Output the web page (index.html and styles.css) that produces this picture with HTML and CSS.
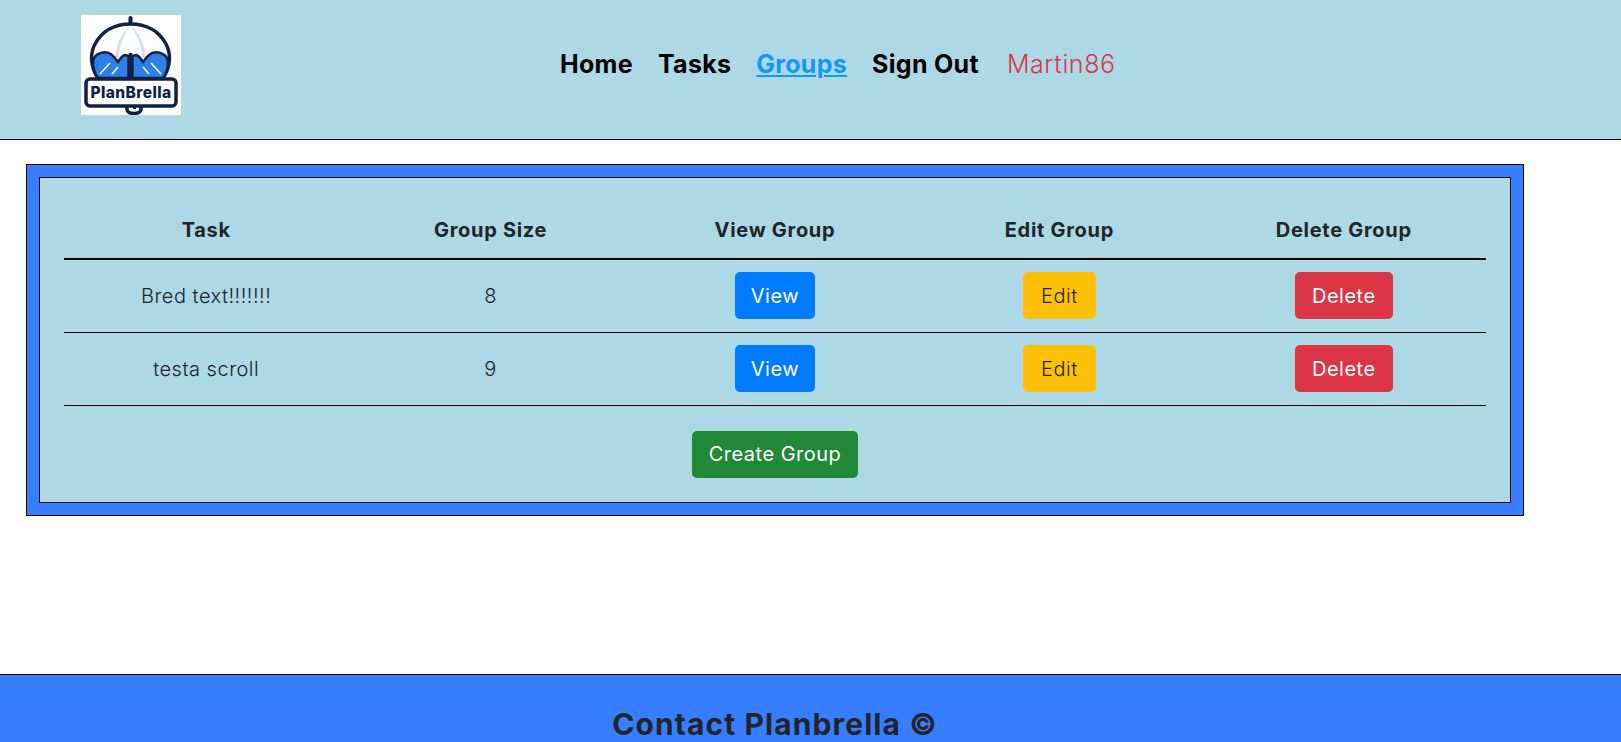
FILE: index.html
```html
<!DOCTYPE html>
<html lang="en">
<head>
  <meta charset="UTF-8" />
  <meta name="viewport" content="width=device-width, initial-scale=1.0"/>
  <title>Planbrella Groups</title>
  <link rel="stylesheet" href="styles.css">
</head>
<body>
  <header class="site-header">
    <div class="logo">
      <svg viewBox="0 0 100 100" width="100" height="100">
        <rect width="100" height="100" fill="#fff"/>
        <path d="M49.5 9 L49.5 3" stroke="#0f2147" stroke-width="4" stroke-linecap="round"/>
        <path d="M17 63 C9 52 9 38 14 29 C21 16 34 9 49.5 9 C65 9 78 16 85 29 C90 38 90 52 82 63 Z" fill="#fff" stroke="#0f2147" stroke-width="3.5"/>
        <path d="M49.5 11 C41 18 34 30 35 42 L38 42 C38 30 43 20 49.5 11 C56 20 61 30 61 42 L64 42 C65 30 58 18 49.5 11 Z" fill="#d5e0ee"/>
        <g id="lobe">
          <path d="M12 46 C13 39 24 34 31 40 C34 42 36 46 37 47 C38 46 40 41 44 40 L47.5 41 L47.5 63 L17 63 C13 58 12 52 12 46 Z" fill="#2f7fe8" stroke="#0f2147" stroke-width="2.5"/>
          <path d="M19 59 L29 48 M31 59 L37 52" stroke="#fff" stroke-width="1.5" fill="none"/>
        </g>
        <use href="#lobe" transform="translate(99 0) scale(-1 1)"/>
        <path d="M49.5 38 L49.5 64" stroke="#0f2147" stroke-width="3.5"/>
        <path d="M46 90 L46 94 C46 100 60 100 60 94 L60 90" fill="#fff" stroke="#0f2147" stroke-width="3.5"/>
        <path d="M52 91 L52 94 L55 94 L55 91 Z" fill="#0f2147"/>
        <rect x="5" y="64" width="90" height="27" rx="4" fill="#fff" stroke="#0f2147" stroke-width="3.5"/>
        <text x="50" y="83" class="logo-text" text-anchor="middle">PlanBrella</text>
      </svg>
    </div>
    <nav class="main-nav">
      <a href="#">Home</a>
      <a href="#">Tasks</a>
      <a href="#" class="active">Groups</a>
      <a href="#">Sign Out</a>
      <span class="username">Martin86</span>
    </nav>
  </header>

  <main class="content">
    <div class="outer-box">
      <div class="inner-box">
        <table class="groups">
          <thead>
            <tr>
              <th>Task</th>
              <th>Group Size</th>
              <th>View Group</th>
              <th>Edit Group</th>
              <th>Delete Group</th>
            </tr>
          </thead>
          <tbody>
            <tr>
              <td>Bred text!!!!!!!</td>
              <td>8</td>
              <td><button class="btn btn-view">View</button></td>
              <td><button class="btn btn-edit">Edit</button></td>
              <td><button class="btn btn-delete">Delete</button></td>
            </tr>
            <tr>
              <td>testa scroll</td>
              <td>9</td>
              <td><button class="btn btn-view">View</button></td>
              <td><button class="btn btn-edit">Edit</button></td>
              <td><button class="btn btn-delete">Delete</button></td>
            </tr>
          </tbody>
        </table>
        <div class="create-row">
          <button class="btn btn-create">Create Group</button>
        </div>
      </div>
    </div>
  </main>

  <footer class="site-footer">
    <h2>Contact Planbrella ©</h2>
  </footer>
</body>
</html>
```

FILE: styles.css
```css
* {
  box-sizing: border-box;
}
html, body {
  height: 100%;
}
body {
  margin: 0;
  overflow: hidden;
  background: #fff;
  color: #212529;
  font-family: Inter, "Open Sans", sans-serif;
}

.site-header {
  height: 140px;
  display: flex;
  background: #add8e6;
  border-bottom: 1px solid #000;
  padding: 15px 0 0 81px;
}
.logo {
  width: 100px;
  height: 100px;
}
.logo-text {
  font-family: Inter, sans-serif;
  font-weight: 800;
  font-size: 15.5px;
  letter-spacing: 0.4px;
  fill: #0f2147;
}
.main-nav {
  display: flex;
  align-items: center;
  gap: 25px;
  height: 98px;
  margin-left: 379px;
  font-size: 25px;
  letter-spacing: 0.3px;
  font-weight: 700;
}
.main-nav a {
  color: #000;
  text-decoration: none;
}
.main-nav a.active {
  color: #0d99ff;
  text-decoration: underline;
}
.username {
  margin-left: 3px;
  color: #dc3545;
  font-weight: 300;
  letter-spacing: 0.6px;
}

.content {
  height: 534px;
  padding: 24px 0 0 26px;
}
.outer-box {
  width: 1498px;
  background: #377dff;
  border: 1px solid #000;
  padding: 12px;
}
.inner-box {
  background: #add8e6;
  border: 1px solid #000;
  padding: 23px 24px 24px;
}

.groups {
  width: 100%;
  table-layout: fixed;
  border-collapse: collapse;
  font-size: 20px;
  letter-spacing: 0.5px;
  text-align: center;
}
.groups th {
  font-weight: 700;
  letter-spacing: 0.7px;
  height: 58px;
  padding: 0;
  border-bottom: 2px solid #000;
}
.groups td {
  height: 73px;
  padding: 0;
  font-weight: 300;
  border-bottom: 1px solid #000;
}

.btn {
  height: 47px;
  padding: 0 16px;
  border: 1px solid transparent;
  border-radius: 5px;
  font-family: inherit;
  font-size: 20px;
  letter-spacing: 0.5px;
  font-weight: 400;
  color: #fff;
  cursor: pointer;
}
.btn-view {
  background: #007bff;
  padding: 0 15px;
}
.btn-edit {
  background: #ffc107;
  color: #212529;
  font-weight: 300;
  padding: 0 17px;
}
.btn-delete {
  background: #dc3545;
}
.btn-create {
  background: #218838;
}
.create-row {
  display: flex;
  justify-content: center;
  padding-top: 25px;
}

.site-footer {
  height: 68px;
  background: #377dff;
  border-top: 1px solid #000;
  padding-right: 71px;
  text-align: center;
}
.site-footer h2 {
  margin: 0;
  padding-top: 31px;
  font-size: 30px;
  line-height: 36px;
  letter-spacing: 1.1px;
  font-weight: 700;
  color: #212529;
}
```
